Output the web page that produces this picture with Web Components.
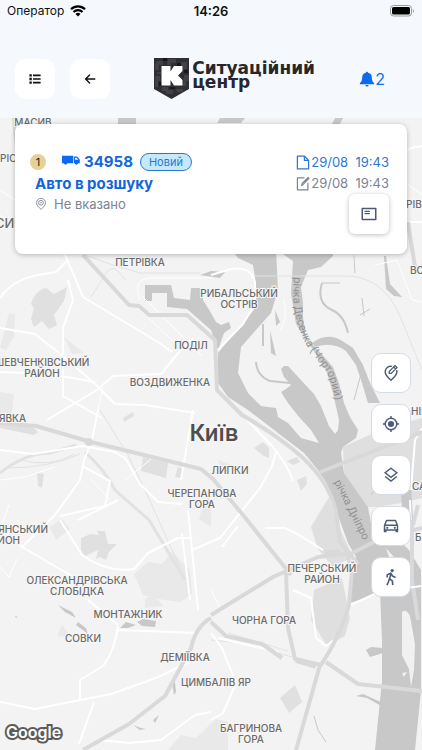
<!DOCTYPE html>
<html lang="uk">
<head>
<meta charset="utf-8">
<meta name="viewport" content="width=device-width, initial-scale=1">
<title>Ситуаційний центр</title>
<style>
    body{
        margin: 0;
        font-family: Inter, "Liberation Sans", sans-serif;
        color: #111;
        background: #f5f9fd
    }
</style>
</head>
<body>
<situation-screen></situation-screen>
<script>
const icons = {
    list: '<path d="M3 4h3v3H3zM3 8.500h3v3H3zM3 13h3v3H3zM7.500 4.500H17v2H7.500zM7.500 9H17v2H7.500zM7.500 13.500H17v2H7.500z" fill="currentColor"/>',
    back: '<path d="M16 10H5M9.500 5L4.500 10l5 5" fill="none" stroke="currentColor" stroke-width="1.700" stroke-linecap="round" stroke-linejoin="round"/>',
    bell: '<path d="M10 1c.8 0 1.300.6 1.300 1.300 3 .6 4.700 2.700 4.700 5.500 0 4.500 1.200 5.900 2.900 7.300V16.500H1.100v-1.400C2.800 13.700 4 12.300 4 7.800c0-2.800 1.700-4.900 4.700-5.500C8.700 1.600 9.200 1 10 1zM8 17.500h4a2 2 0 0 1-4 0z" fill="currentColor"/>',
    truck: '<path d="M0 3h12.500v8.500H0zM13.300 4h3.700l2.800 3.500v4h-6.500zM14.500 5.200v2.300h3.600l-1.900-2.300z" fill="currentColor" fill-rule="evenodd"/><circle cx="4" cy="11.500" r="1.600" fill="currentColor"/><circle cx="16" cy="11.500" r="1.600" fill="currentColor"/>',
    pin: '<path d="M10 19C6 15 2.500 12 2.500 8a7.500 7.500 0 0 1 15 0c0 4-3.500 7-7.500 11z" fill="none" stroke="currentColor" stroke-width="1.500"/><circle cx="10" cy="8" r="4" fill="none" stroke="currentColor" stroke-width="1.500"/><circle cx="10" cy="8" r="1.300" fill="currentColor"/>',
    file: '<path d="M2 1h10l6 6v12H2zM12 1v6h6" fill="none" stroke="currentColor" stroke-width="1.800" stroke-linejoin="round"/>',
    edit: '<path d="M12 2H2v17h15V9M8 13l1-3.500L17.500 1.500l1 1-8 8.500z" fill="none" stroke="currentColor" stroke-width="1.700" stroke-linejoin="round"/>',
    card: '<path d="M2.500 4h15v12h-15z" fill="none" stroke="currentColor" stroke-width="1.700" stroke-linejoin="round"/><path d="M5 7h6M5 9.500h6" stroke="currentColor" stroke-width="1.300"/>',
    pinEdit: '<path d="M11 2.600A6.300 6.300 0 0 0 3.500 8.700c0 3.100 2.400 5.900 6.500 9.300 4.100-3.400 6.500-6.200 6.500-9.300 0-.7-.1-1.300-.3-1.900" fill="none" stroke="currentColor" stroke-width="1.600"/><path d="M8 10.500V8.300l6.500-6.500 2.200 2.200-6.500 6.500zM13 3.400l2.200 2.200" fill="none" stroke="currentColor" stroke-width="1.400"/>',
    locate: '<circle cx="10" cy="10" r="6.400" fill="none" stroke="currentColor" stroke-width="1.600"/><circle cx="10" cy="10" r="3.400" fill="currentColor"/><path d="M10 1v3M10 16v3M1 10h3M16 10h3" stroke="currentColor" stroke-width="1.600"/>',
    layers: '<path d="M10 2.500l6.500 5-6.500 5-6.500-5zM3.500 11.700l6.500 5 6.500-5" fill="none" stroke="currentColor" stroke-width="1.600"/>',
    car: '<path d="M2.800 9.500L5 3.800h10l2.200 5.700v5H2.800zM2.800 9.200h14.400" fill="none" stroke="currentColor" stroke-width="1.600" stroke-linejoin="round"/><path d="M2 14h3v3H2zM15 14h3v3h-3z" fill="currentColor"/><circle cx="5.800" cy="12" r="1.200" fill="currentColor"/><circle cx="14.200" cy="12" r="1.200" fill="currentColor"/>',
    walk: '<circle cx="11.300" cy="2.800" r="1.800" fill="currentColor"/><path d="M5.800 10.500V7.500l4-1.800 1.900 3.300 3.300 1.600M9.800 6L8.500 12l3 2.300.5 4.700M8.300 11.500L7.300 15 5.500 19" fill="none" stroke="currentColor" stroke-width="1.800" stroke-linejoin="round"/>'
}

class AppIcon extends HTMLElement{
    constructor(){
        super()
        this.attachShadow({mode: 'open'})
    }
    connectedCallback(){
        this.shadowRoot.innerHTML = `
            <style>
                :host{ display: block; width: 18px; height: 18px; flex: none }
                svg{ display: block; width: 100%; height: 100% }
            </style>
            <svg viewBox="0 0 20 20" aria-hidden="true">${icons[this.getAttribute('name')]}</svg>
        `
    }
}
window.customElements.define('app-icon', AppIcon)

class IconButton extends HTMLElement{
    constructor(){
        super()
        this.attachShadow({mode: 'open'})
    }
    connectedCallback(){
        this.shadowRoot.innerHTML = `
            <style>
                :host{ display: block; flex: none; color: #111 }
                :host([kind="map"]), :host([kind="card"]){ color: #4d5a78 }
                button{
                    display: grid;
                    place-items: center;
                    box-sizing: border-box;
                    width: 40px;
                    height: 40px;
                    padding: 0;
                    border: 0;
                    border-radius: 10px;
                    background: #fff;
                    color: inherit
                }
                :host([kind="map"]) button{ border: 1px solid #d5dce8 }
                :host([kind="card"]) button{ border-radius: 6px; box-shadow: 0 1px 5px rgba(0,0,0,.25) }
                :host([kind="header"]) app-icon{ width: 16px; height: 16px }
            </style>
            <button type="button" aria-label="${this.getAttribute('label')}">
                <app-icon name="${this.getAttribute('icon')}"></app-icon>
            </button>
        `
    }
}
window.customElements.define('icon-button', IconButton)

class StatusBar extends HTMLElement{
    constructor(){
        super()
        this.attachShadow({mode: 'open'})
    }
    connectedCallback(){
        this.shadowRoot.innerHTML = `
            <style>
                :host{
                    display: grid;
                    grid-template-columns: 1fr auto 1fr;
                    align-items: center;
                    height: 22px;
                    padding: 0 7px;
                    font-size: 12px;
                    line-height: 16px
                }
                .carrier{ display: flex; align-items: center; gap: 6px }
                .time{ font-weight: 600; font-size: 13px }
                .battery{ justify-self: end }
                svg{ display: block }
            </style>
            <div class="carrier">
                <slot></slot>
                <svg width="16" height="12" viewBox="0 0 16 12" fill="none" stroke="#000" stroke-width="2.200">
                    <path d="M1 4.200a10 10 0 0 1 14 0M3.500 7a6.400 6.400 0 0 1 9 0"/>
                    <path d="M8 11.500L5.500 9a3.500 3.500 0 0 1 5 0z" fill="#000" stroke="none"/>
                </svg>
            </div>
            <div class="time"><slot name="time"></slot></div>
            <svg class="battery" width="25" height="12" viewBox="0 0 25 12">
                <rect x=".5" y=".5" width="21" height="10.500" rx="3" fill="none" stroke="#999"/>
                <rect x="2" y="2" width="18" height="7.500" rx="1.500"/>
                <path d="M23 4v4c1.300-.6 1.300-3.400 0-4z" fill="#999"/>
            </svg>
        `
    }
}
window.customElements.define('status-bar', StatusBar)

class AppHeader extends HTMLElement{
    constructor(){
        super()
        this.attachShadow({mode: 'open'})
    }
    connectedCallback(){
        this.shadowRoot.innerHTML = `
            <style>
                :host{
                    display: flex;
                    align-items: center;
                    justify-content: space-between;
                    padding: 37px 37px 19px 15px
                }
                nav{ display: flex; gap: 15px }
                .logo{ display: flex; align-items: center; gap: 2px; height: 40px }
                .name{
                    font: bold 17px/14px "DejaVu Sans", sans-serif;
                    color: #27272b;
                    padding-bottom: 8px
                }
                .name div{ white-space: nowrap }
                .alerts{
                    display: flex;
                    align-items: center;
                    padding: 0;
                    border: 0;
                    background: none;
                    font: 16px/20px Inter, sans-serif;
                    color: #0b6bf0
                }
                .alerts app-icon{ width: 16px; height: 16px }
            </style>
            <nav>
                <icon-button kind="header" icon="list" label="Список"></icon-button>
                <icon-button kind="header" icon="back" label="Назад"></icon-button>
            </nav>
            <div class="logo">
                <svg width="36" height="42" viewBox="0 0 36 42" aria-hidden="true">
                    <path d="M0 0h35v31L17.500 41 0 31z" fill="#2e2e33"/>
                    <path d="M3 3h6v4H5v5H1V6zM14 1h8v4h-5v2h-4zM27 4h6v7h-4V8h-3zM1 18h5v5H4v6H1zM30 17h5v6h-3v5h-3zM8 29h6v3h5v4h-7v-3H8zM22 31h7v3h-6zM3 14h4v2H3z" fill="#414147"/>
                    <path d="M9 0h4v3H9zM23 5h4v3h-4zM5 24h3v4H5zM30 12h4v3h-4zM16 29h5v2h-5z" fill="#17171b"/>
                    <path d="M7.500 8h9v5.500L20 8h8.500v5L24 17.500l4.500 4.500v5.500H20L16.500 22v5.500h-9z" fill="#fff"/>
                </svg>
                <div class="name">
                    <div><slot name="first"></slot></div>
                    <div><slot name="second"></slot></div>
                </div>
            </div>
            <button class="alerts" type="button"><app-icon name="bell"></app-icon><slot name="alerts"></slot></button>
        `
    }
}
window.customElements.define('app-header', AppHeader)

class IncidentCard extends HTMLElement{
    constructor(){
        super()
        this.attachShadow({mode: 'open'})
    }
    connectedCallback(){
        this.shadowRoot.innerHTML = `
            <style>
                :host{
                    display: flex;
                    justify-content: space-between;
                    padding: 28px 18px 20px 15px;
                    border-radius: 8px;
                    background: #fff;
                    box-shadow: 0 1px 5px rgba(0,0,0,.25);
                    font-size: 13px;
                    line-height: 20px;
                    color: #7c8394
                }
                .head, .address, .date{ display: flex; align-items: center }
                .count{
                    width: 16px;
                    border-radius: 8px;
                    background: #e3d293;
                    color: #222;
                    font-size: 11px;
                    line-height: 16px;
                    text-align: center;
                    margin-right: 16px
                }
                .number, h2{ color: #1266dc; font-size: 15px; line-height: 24px; font-weight: 700; margin: 0 }
                .head{ height: 20px }
                .head app-icon{ color: #0b6bf0; margin-right: 4px }
                .state{
                    box-sizing: border-box;
                    height: 18px;
                    margin-left: 7px;
                    padding: 0 8px;
                    border: 1px solid #2c78cf;
                    border-radius: 9px;
                    background: #c4e9fd;
                    color: #2c78cf;
                    font-size: 11px;
                    line-height: 16px
                }
                h2, .address{ margin-left: 5px }
                .address{ gap: 7px; line-height: 16px }
                .address app-icon{ width: 12px; height: 12px }
                .side{ display: flex; flex-direction: column; align-items: flex-end }
                .date{ gap: 1px; line-height: 21px }
                .date app-icon{ width: 14px; height: 15px }
                .created{ color: #2c78cf }
                time{ white-space: pre }
            </style>
            <div>
                <div class="head">
                    <span class="count"><slot name="count"></slot></span>
                    <app-icon name="truck"></app-icon>
                    <span class="number"><slot name="number"></slot></span>
                    <span class="state"><slot name="state"></slot></span>
                </div>
                <h2><slot></slot></h2>
                <div class="address"><app-icon name="pin"></app-icon><slot name="address"></slot></div>
            </div>
            <div class="side">
                <div class="date created"><app-icon name="file"></app-icon><time><slot name="created"></slot></time></div>
                <div class="date"><app-icon name="edit"></app-icon><time><slot name="edited"></slot></time></div>
                <icon-button kind="card" icon="card" label="Деталі"></icon-button>
            </div>
        `
    }
}
window.customElements.define('incident-card', IncidentCard)

class CityMap extends HTMLElement{
    constructor(){
        super()
        this.attachShadow({mode: 'open'})
    }
    connectedCallback(){
        // x, y, name and the optional classes of each label
        const places = [
            [33, 126, 'МАСИВ'], [0, 162, 'РІС', 'start'], [-5, 228, 'СИН', 'start big'],
            [140, 266, 'ПЕТРІВКА'], [239, 297, 'РИБАЛЬСЬКИЙ'], [239, 308, 'ОСТРІВ'],
            [191, 349, 'ПОДІЛ'], [170, 386, 'ВОЗДВИЖЕНКА'], [42, 366, 'ШЕВЧЕНКІВСЬКИЙ'],
            [42, 377, 'РАЙОН'], [-1, 422, 'ЯВКА', 'start'], [230, 474, 'ЛИПКИ'],
            [202, 497, 'ЧЕРЕПАНОВА'], [202, 508, 'ГОРА'], [48, 533, 'ЯНСЬКИЙ', 'end'],
            [20, 544, 'ЙОН', 'end'], [77, 584, 'ОЛЕКСАНДРІВСЬКА'], [77, 595, 'СЛОБІДКА'],
            [128, 618, 'МОНТАЖНИК'], [83, 642, 'СОВКИ'], [264, 624, 'ЧОРНА ГОРА'],
            [185, 661, 'ДЕМІЇВКА'], [216, 686, 'ЦИМБАЛІВ ЯР'], [251, 732, 'БАГРИНОВА'],
            [251, 743, 'ГОРА'], [322, 572, 'ПЕЧЕРСЬКИЙ'], [322, 583, 'РАЙОН'],
            [406, 208, 'РІВН', 'start'], [410, 274, 'ВО', 'start'], [411, 415, 'НІП', 'start'],
            [412, 490, 'СА', 'start'], [415, 541, 'Б', 'start']
        ]
        this.shadowRoot.innerHTML = `
            <style>
                :host{ display: block }
                svg{ display: block; width: 100%; height: 100%; background: #f3f3f3 }
                .park{ fill: #e9e9e9 }
                .block{ fill: #e0e0e0 }
                .water{ fill: #c8c8c8 }
                .land{ fill: #f1f1f1 }
                .creek{ fill: none; stroke: #c8c8c8; stroke-width: 2 }
                .thin{ stroke-width: 1 }
                .road, .minor{ fill: none; stroke: #fff; stroke-width: 2; stroke-linejoin: round }
                .minor{ stroke-width: 1 }
                .rail{ fill: none; stroke: #e2e2e2; stroke-width: 1 }
                .highway{ fill: none; stroke: #d9d9d9; stroke-width: 4; stroke-linejoin: round }
                text{ font: 500 10px Inter, sans-serif; fill: #6b6b6b; text-anchor: middle }
                .place{ stroke: #f6f6f6; stroke-width: 2px; paint-order: stroke }
                .start{ text-anchor: start }
                .end{ text-anchor: end }
                .big{ font-size: 13px }
                .city{ font: 500 24px Roboto, sans-serif; fill: #4e4e4e }
                .river{ font: 11px Roboto, sans-serif; fill: #929292 }
            </style>
            <svg viewBox="0 118 422 632" preserveAspectRatio="xMidYMid slice" role="img" aria-label="Київ">
                <g class="park">
                    <path d="M0 392l14 2-2 20-12 5zM9 313l6 1-1 22-8 14-6-2zM64 337l20 16-12 1zM134 574l14-12 14 2 10-12 18 18 2 24-12 8-22-3-15-4zM168 750l13-15 15 3 20-19 12 3v28zM50 527l12-8 8 10-14 11zM205 500l6-3v30l-12-8zM145 598l10-2 8 10-18 2zM62 625l-5 11 15 2zM218 460l14 5-6 9z"/>
                    <path d="M343 447l37-17 42-12v80l-20 5-27 4h-7l-24-34zM329 497l10 30 14 30-20 10-15-18-7-22zM314 590l28-12 8 40-5 18-18 10-16-26z" fill="#dfdfdf"/>
                    <path d="M31 304q4-14 15-16l8 6 13-7-3 14-10 14 3 10-8 4-7-8-8 6-3-8 3-11z" class="block"/>
                    <path d="M81 538l10-4 8 1-2-4 8 0 3 13 9 0-8 8-3 8-6-3-4 2 2-9-13 6-4-6z" class="block"/>
                    <path d="M143 457l25 6-2 15-25-7zM178 467l6 2-3 9-6-1zM280 698l15-13 7 17-13 11zM254 448l9-6 6 6 0 10-5-2zM287 461l10-4 3 5-7 3zM297 480l9-4 1 8-6 7zM123 418l10-6 1 4-10 6zM37 473l7 1-2 14-4-2zM0 421l30 3 8 8-4 3-34-7z" class="block"/>
                </g>
                <g class="water">
                    <path d="M232 250l6 8 15 7 2 12-1 33-20 23-16 20v30l10 14 20 13 30 23 26 20 14 17 8 12 10 28 12 33 8 14-5 30-1 16 12-4 18-8 2 50v40l-7 69h40l6-59V570l-12-20-5-5-21-4-9-2-6-32-24-34-3-20 2-6 13-9 2-8-8-13-6-14-5-20-6-16-15-17-12-13-3-20v-14l-2-16 7-17 13-3 12-11v-6h-56l16 11-2 33 5 30 15 23 15 23 7 23 6 27-1 10-3 4-6-8-8-20-7-12-14-15-12-13h-4l-3 3 3 8 7 8-5 4-5 3 7 11 11 14 12 13 8 13-18-5-13-15-10-6-2-9-15-2-13-13-10-20 3-26 30-34 7-23-2-40z"/>
                    <path d="M145 285h26l3 13 16 2 1-12 12 0v12l8 13 5 9 5 3 8-3 2 6-7 5-6 17-7-20-24-21-20-2v-14h-15v8h-7z"/>
                    <path d="M316 347l-4-4q16-12 32-1l9 6 10 17 7 18 10 20-12 0-6-20-6-18-10-14q-14-10-30-4z"/>
                    <path d="M118 118h18v8h-18zM220 118h25l-4 5h-24zM335 118h8l-3 6h-8zM200 275l11-4 14 1-5 6zM386 256l4 28 12 13-8-1-8-7-2-33zM78 622l8 6 2 6-12-9zM58 605l14 7 4 6-11-6zM120 628l6-6 10 3-8 3zM137 622l6-3 13 2-1 6-13-1zM172 682l3 0 1 10-2 3zM133 725l8 3 5 1-6 1zM153 720l6-5-4 8zM262 324h2v22h-2zM275 310l5 12-4 4zM270 330l6 26-5-3zM15 616l3 1-2 1zM401 493l10-10 2 37-10 5zM366 650l5-3 12 1v5l-13 4zM356 696l7-2 20 9v4l-16-9z"/>
                </g>
                <path d="M402 612q4-4 8 4l5 28-1 26-3 17-2-18-7-14zM386 548l8 9-5 0zM402 673l5-1-3 5z" class="land"/>
                <path class="creek" d="M322 283q-6 20 10 27 12 5 16 23M256 362q1 14 14 19l20 2"/>
                <path class="creek thin" d="M322 283h18M354 256l1 17M362 370l-8 30M362 298l2 18M360 315l10-6M371 495q2-7 11 0M314 716l4 14 8 12"/>
                <g class="rail">
                    <path d="M100 410l28 45 23 48 20 45 14 30M85 255q25 10 55 18h60M125 280q-12-20-20-5l-14 22M5 468q45 0 75-14M20 460q30 8 55-6M211 640l30 3 55 15M228 633l60 18M254 276h90q38-1 56 40l22 54M355 262l-2-12"/>
                    <path d="M85 452q20 18 30 38l34 30 36 60M0 473q25-20 50-20l26-8" stroke-width="3"/>
                </g>
                <g class="road">
                    <path d="M0 298q12-18 38-23l18-3 12-12M40 240q20 5 26 17l17 40 75 45 14 10M68 280l5 20-10 28v68l39 22M0 328l35 6 28 22 32 28 20 20 30 1 50 8M0 372l50 2 45 8M47 420l50-30 16-14 48-2 18-22 14-14M0 450l33 4 50-8 32 6 10 6 15 26 18 18 24 2M98 410l-6 30-8 20-4 20-25 35-33 32-22-18M22 547l55 32M60 520l22 35q25 18 52 14l14-16 30-15h14M60 516l45-10 5-25-28-15M88 600l30 25M118 626q-3 24-15 40l-23 14v20L35 709 0 702M81 700l30-6 45-16 50-24M94 702l-15 42M99 740l30 3 32-3 34-25 16-3M118 630l80 3M211 720l12-7 13-30-14-35-11-15M190 600l-8-66M198 610l-10-100M193 410l-12 70M118 500l-40 20M233 405l40 42q16 20 20 34M192 550l28-12 40-50 12-22 4-14M265 528l20 0 14 7 24 15M222 547l16-21"/>
                    <path d="M411 490l4-50 7-12M410 500l2 55M395 158l16-10 11-2M395 222h27M293 590l18 8 5 40 10 8 8-6M218 638l60 14"/>
                </g>
                <path class="minor" d="M135 305l42 40M142 296l60 60M110 500l-20-22M125 480l30-24M0 530l9-25M0 567l9 10 8-18M211 590l10 20M0 480l25-3 30-10M375 265l22-5 15 40 10 2M98 410l5-22M395 175l27 20M0 190l15 10M0 215l14 12M280 330q8-10 4-30M140 300q-8-22 12-22h60"/>
                <g class="highway">
                    <path d="M0 423l36 3 55 16 110 27 12 10 30 36 48 60M83 255l46 50 10 1 10 9h38l28 25 2 50 25 25q35 20 60 42 28 26 34 55l4 30 18 22M211 615l62-38 45-20 34-4 30-15 40-10M286 572l2 56 7 31 26 6q20-30 28-60l3-35-6-20M211 622l15 14 36 8 20 14M211 618q-15 8-20 30l-26 48-36 28-46 26M320 665l-24 85M326 662l32 22 64 7M320 472l102-40M412 520v60l6 40M418 505l-5 20M14 118q4 50 14 85M408 222l7 45"/>
                    <path d="M296 660l20 6M325 553l15 0" stroke-width="6"/>
                    <circle cx="89" cy="442" r="2"/>
                </g>
                <path class="road" d="M351 605l30-14 41-5M218 350l25-26 12-20v-22q-4-16-24-13l-20 6"/>
                <path id="desenka" fill="none" d="M294 277q-4 39 13 69l18 24q8 10 12 44"/>
                <path id="dnipro" fill="none" d="M334 482l40 80"/>
                <text class="river start"><textPath href="#desenka">річка Десенка (Чорторий)</textPath></text>
                <text class="river start"><textPath href="#dnipro">річка Дніпро</textPath></text>
                ${places.map(([x, y, name, kind = '']) => `<text class="place ${kind}" x="${x}" y="${y}">${name}</text>`).join('')}
                <text class="place city" x="214" y="441">Київ</text>
            </svg>
        `
    }
}
window.customElements.define('city-map', CityMap)

class SituationScreen extends HTMLElement{
    constructor(){
        super()
        this.attachShadow({mode: 'open'})
    }
    connectedCallback(){
        this.shadowRoot.innerHTML = `
            <style>
                :host{ display: flex; flex-direction: column; min-height: 100vh }
                main{
                    position: relative;
                    flex: 1;
                    display: flex;
                    flex-direction: column;
                    padding: 6px 11px 8px 6px
                }
                city-map{ position: absolute; inset: 0 }
                incident-card{ position: relative; margin: 0 4px 0 9px }
                .tools{
                    position: relative;
                    flex: 1;
                    display: flex;
                    flex-direction: column;
                    justify-content: center;
                    align-items: flex-end;
                    gap: 11px;
                    padding: 6px 0 32px
                }
                .google{
                    position: relative;
                    font: 600 16px/20px Inter, sans-serif;
                    color: #fff;
                    -webkit-text-stroke: 4px #5c5c5c;
                    paint-order: stroke fill
                }
            </style>
            <status-bar>Оператор<span slot="time">14:26</span></status-bar>
            <app-header>
                <span slot="first">Ситуаційний</span>
                <span slot="second">центр</span>
                <span slot="alerts">2</span>
            </app-header>
            <main>
                <city-map></city-map>
                <incident-card>
                    <span slot="count">1</span>
                    <span slot="number">34958</span>
                    <span slot="state">Новий</span>
                    Авто в розшуку
                    <span slot="address">Не вказано</span>
                    <span slot="created">29/08  19:43</span>
                    <span slot="edited">29/08  19:43</span>
                </incident-card>
                <div class="tools">
                    <icon-button kind="map" icon="pinEdit" label="Змінити місце"></icon-button>
                    <icon-button kind="map" icon="locate" label="Моє місце"></icon-button>
                    <icon-button kind="map" icon="layers" label="Шари"></icon-button>
                    <icon-button kind="map" icon="car" label="Автомобілем"></icon-button>
                    <icon-button kind="map" icon="walk" label="Пішки"></icon-button>
                </div>
                <div class="google">Google</div>
            </main>
        `
    }
}
window.customElements.define('situation-screen', SituationScreen)
</script>
</body>
</html>
